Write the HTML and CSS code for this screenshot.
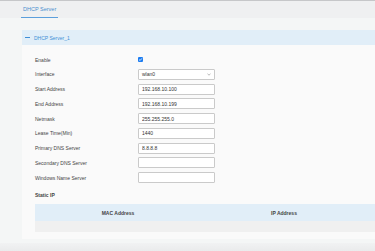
FILE: index.html
```html
<html>
<head>
<title>DHCP Server</title>
<link rel="stylesheet" href="styles.css">
</head>
<body>
<div class="tabs">
	<div class="tab active">DHCP Server</div>
</div>

<div class="content">
	<div class="panel">
		<div class="panel-head">
			<span class="dash"></span>DHCP Server_1
		</div>
		<div class="panel-body">
			<div class="form">
				<div class="row">
					<div class="label">Enable</div>
					<div class="field">
						<span class="check"><svg width="5" height="5" viewBox="0 0 5 5"><path d="M1.1 2.6 L2.1 3.5 L3.9 1.4" fill="none" stroke="#fff" stroke-width="0.8"/></svg></span>
					</div>
				</div>
				<div class="row">
					<div class="label">Interface</div>
					<div class="field">
						<div class="select">wlan0<svg width="4" height="3" viewBox="0 0 4 3"><path d="M0.5 0.8 L2 2.2 L3.5 0.8" fill="none" stroke="#888" stroke-width="0.6"/></svg></div>
					</div>
				</div>
				<div class="row">
					<div class="label">Start Address</div>
					<div class="field"><input type="text" value="192.168.10.100"></div>
				</div>
				<div class="row">
					<div class="label">End Address</div>
					<div class="field"><input type="text" value="192.168.10.199"></div>
				</div>
				<div class="row">
					<div class="label">Netmask</div>
					<div class="field"><input type="text" value="255.255.255.0"></div>
				</div>
				<div class="row">
					<div class="label">Lease Time(Min)</div>
					<div class="field"><input type="text" value="1440"></div>
				</div>
				<div class="row">
					<div class="label">Primary DNS Server</div>
					<div class="field"><input type="text" value="8.8.8.8"></div>
				</div>
				<div class="row">
					<div class="label">Secondary DNS Server</div>
					<div class="field"><input type="text" value=""></div>
				</div>
				<div class="row">
					<div class="label">Windows Name Server</div>
					<div class="field"><input type="text" value=""></div>
				</div>
			</div>

			<div class="section-title">Static IP</div>
			<table class="static">
				<tr>
					<th>MAC Address</th>
					<th>IP Address</th>
					<th></th>
				</tr>
				<tr class="empty">
					<td colspan="3"></td>
				</tr>
			</table>
		</div>
	</div>
</div>

<div class="footer"></div>
</body>
</html>
```

FILE: styles.css
```css
body { margin:0; background:#f4f6f6; font-family:"Liberation Sans", Arial, sans-serif; color:#333; overflow:hidden; border-top:1px solid #c6c7c9; }

.tabs { height:17px; background:#eff0f1; padding-left:21px; display:flex; }
.tab { font-size:5.5px; line-height:16px; padding:0 2px; color:#4a8fcf; }
.tab.active { border-bottom:1px solid #5c9fdc; }

.content { padding:12px 0 0 22px; }
.panel { width:540px; background:#fafafa; }
.panel-head { height:15px; background:#e1eef8; display:flex; align-items:center; padding-left:3px; font-size:5px; color:#3f8ed6; }
.dash { width:5px; height:1px; background:#3f8ed6; margin-right:4px; }
.panel-body { padding:9px 13px 7px 13px; }

.form { display:flex; flex-direction:column; gap:3.75px; }
.row { display:flex; align-items:center; height:11px; }
.label { width:103px; font-size:5px; color:#444; }
.field { display:flex; align-items:center; }
.check { width:5px; height:5px; background:#1c7cf0; border-radius:1px; display:flex; }
input, .select { box-sizing:border-box; width:77px; height:11px; border:1px solid #cacaca; border-radius:1px; background:#fff; font-family:"Liberation Sans", Arial, sans-serif; font-size:5px; color:#333; padding:0 3px; margin:0; outline:none; }
.select { display:flex; align-items:center; justify-content:space-between; }

.section-title { font-size:5px; font-weight:bold; color:#444; line-height:6px; margin:9px 0 6px 0; }
.static { border-collapse:collapse; width:498px; table-layout:fixed; }
.static th { height:17px; background:#e1eef8; font-size:5px; font-weight:bold; color:#444; text-align:center; padding:0; }
.static .empty td { height:11px; background:#f0f0f0; padding:0; }

.footer { margin-top:4px; height:10px; background:linear-gradient(#f1f2f3, #e8e9ea); }
```
